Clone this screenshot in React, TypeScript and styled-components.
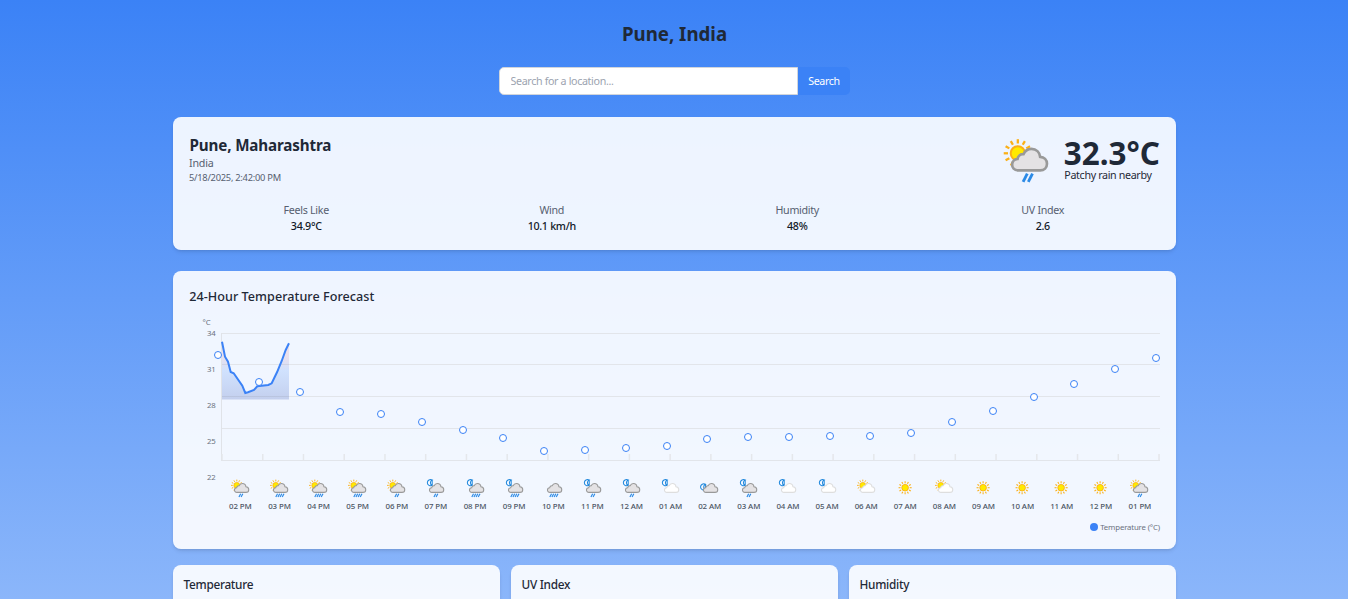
import React from "react";
import styled, { createGlobalStyle } from "styled-components";

const Global = createGlobalStyle`
  *, *::before, *::after { box-sizing: border-box; }
  html, body { margin: 0; height: 599px; overflow: hidden; }
  body { font-family: "Noto Sans", "Open Sans", sans-serif; color: #1f2937; }
  h1, h2, h3, p { margin: 0; }
`;

const Page = styled.div`
  height: 599px;
  overflow: hidden;
  background: linear-gradient(#3b82f6, #8bb6fa);
  display: flex;
  flex-direction: column;
  align-items: center;
`;

const Title = styled.h1`
  margin-top: 20px;
  padding-left: 1px;
  font-size: 18.7px;
  line-height: 28px;
  font-weight: 700;
`;

const SearchBar = styled.form`
  display: flex;
  flex: none;
  margin: 19px 0 22px;
  width: 351px;
  height: 28px;
`;

const SearchInput = styled.input`
  flex: 1;
  min-width: 0;
  padding: 0 11px;
  border: 1px solid #d1d5db;
  border-radius: 5px 0 0 5px;
  background: #fff;
  font: 10.7px "Noto Sans", sans-serif;
  letter-spacing: -0.35px;
  &::placeholder { color: #9ca3af; }
`;

const SearchButton = styled.button`
  width: 52px;
  padding: 0 0 0 1px;
  border: 0;
  border-radius: 0 5px 5px 0;
  background: #3b82f6;
  color: #fff;
  font: 10.7px "Noto Sans", sans-serif;
  letter-spacing: -0.35px;
`;

const Main = styled.main`
  width: 1003px;
  flex: none;
`;

const Card = styled.section<{ $h: number; $gap: number }>`
  height: ${(p) => p.$h}px;
  margin-bottom: ${(p) => p.$gap}px;
  padding: 16px 16px 0;
  border-radius: 8px;
  background: rgba(255, 255, 255, 0.9);
  box-shadow: 0 3px 4px -1px rgba(0, 0, 0, 0.1), 0 1px 3px -1px rgba(0, 0, 0, 0.1);
`;

const CurrentCard = styled(Card)`
  padding: 16px 15.5px 0 16.5px;
`;

const Row = styled.div`
  display: flex;
  justify-content: space-between;
`;

const Place = styled.h2`
  margin: 2px 0 0 0.5px;
  font-size: 15.2px;
  line-height: 21px;
  letter-spacing: -0.14px;
`;

const Muted = styled.p<{ $size: number; $lh: number; $ls: number }>`
  font-size: ${(p) => p.$size}px;
  line-height: ${(p) => p.$lh}px;
  letter-spacing: ${(p) => p.$ls}px;
  color: #566070;
`;

const Now = styled.div`
  display: flex;
`;

const BigIcon = styled.svg`
  width: 45.6px;
  height: 43.7px;
  margin: 6.800px 13px 0 0;
  overflow: visible;
`;

const Degrees = styled.p`
  margin-top: 2.5px;
  font-size: 31.4px;
  line-height: 33px;
  font-weight: 700;
  white-space: nowrap;
`;

const Condition = styled.p`
  padding-left: 0.5px;
  font-size: 10.7px;
  line-height: 12px;
  letter-spacing: -0.35px;
`;

const Stats = styled.div`
  display: grid;
  grid-template-columns: repeat(4, 1fr);
  column-gap: 11px;
  margin-top: 17px;
  text-align: center;
`;

const StatValue = styled.p`
  font-size: 10.7px;
  line-height: 16px;
  font-weight: 500;
  letter-spacing: -0.3px;
  color: #111827;
`;

const ChartTitle = styled.h3`
  margin-left: 0.7px;
  font-size: 12.6px;
  line-height: 19px;
  letter-spacing: 0.04px;
  font-weight: 500;
`;

const ChartBody = styled.div`
  display: flex;
  margin-top: 11px;
  height: 170px;
`;

const Scale = styled.div`
  width: 32px;
  padding-right: 5px;
  text-align: right;
  font-size: 7.8px;
  line-height: 10px;
  letter-spacing: -0.15px;
  color: #6b7280;
`;

const Unit = styled.div`
  padding-right: 5px;
  height: 11px;
`;

const ScaleMark = styled.div`
  height: 36px;
`;

const Plot = styled.svg`
  width: 947px;
  height: 150px;
  margin-left: -8px;
  overflow: visible;
  flex: none;
`;

const Hours = styled.div`
  display: grid;
  grid-template-columns: repeat(24, 1fr);
  margin: -9px 0 0 32.3px;
`;

const Hour = styled.div`
  display: flex;
  flex-direction: column;
  align-items: center;
  font-size: 7.9px;
  line-height: 11px;
  letter-spacing: -0.1px;
  font-weight: 500;
  color: #4b5563;
  white-space: nowrap;
`;

const HourIcon = styled.svg`
  width: 21px;
  height: 21px;
  margin-bottom: 2px;
`;

const Legend = styled.div`
  display: flex;
  justify-content: flex-end;
  align-items: center;
  gap: 2.5px;
  margin: 9.5px -0.5px 0 0;
  font-size: 7.8px;
  line-height: 11px;
  letter-spacing: -0.15px;
  color: #6b7280;
`;

const Dot = styled.span`
  width: 8px;
  height: 8px;
  border-radius: 50%;
  background: #3b82f6;
`;

const Panels = styled.div`
  display: grid;
  grid-template-columns: repeat(3, 1fr);
  gap: 11px;
`;

const Panel = styled(Card)`
  padding: 9px 11px;
`;

const PanelTitle = styled.h3`
  font-size: 11.8px;
  line-height: 20px;
  letter-spacing: -0.28px;
  font-weight: 500;
`;

type Sky = "day" | "night" | "none";
type Kind = { sky: Sky; cloud?: "grey" | "white"; drops?: number; low?: boolean };

const CLOUD =
  "M12 32C7.500 32 5.500 29 5.500 26C5.500 22.500 8 20.200 11.200 19.900C11.800 16.500 14.500 14.600 17.500 14.900C19 11.500 22 9.300 25.800 9.300C31 9.300 34.500 13 35 17.700C39.300 18 42.200 21 42.200 25C42.200 29 39.300 32 35 32Z";

function Sun({ x, y, r }: { x: number; y: number; r: number }) {
  return (
    <g>
      <circle cx={x} cy={y} r={r} fill="#ffea00" stroke="#fbb017" strokeWidth={r * 0.28} />
      {Array.from({ length: 12 }, (_, i) => {
        const a = (i * Math.PI) / 6;
        return (
          <line
            key={i}
            x1={x + Math.cos(a) * r * 1.38}
            y1={y + Math.sin(a) * r * 1.38}
            x2={x + Math.cos(a) * r * 1.98}
            y2={y + Math.sin(a) * r * 1.98}
            stroke="#fbb017"
            strokeWidth={r * 0.32}
          />
        );
      })}
    </g>
  );
}

function Weather({ sky, cloud, drops = 0, low }: Kind) {
  if (!cloud) return <Sun x={22} y={20} r={8.500} />;
  return (
    <g>
      {sky === "day" && <Sun x={13.500} y={14} r={7.500} />}
      {sky === "night" && (
        <path
          transform={low ? "translate(-2 11)" : undefined}
          d="M14.500 0C9 -3 2 1 2 7S9 17 14.500 14C8.500 12 8.500 2 14.500 0ZM14.500 1V13"
          fill="none"
          stroke="#1c86dc"
          strokeWidth="2.600"
        />
      )}
      <path
        d={CLOUD}
        transform="translate(2 0)"
        fill={cloud === "grey" ? "#e4e2e4" : "#fff"}
        stroke={cloud === "grey" ? "#999" : "#dedede"}
        strokeWidth="2.800"
      />
      {Array.from({ length: drops }, (_, i) => {
        const x = 24 - (drops - 1) * 2.75 + i * 5.5;
        return <path key={i} d={`M${x + 2.2} 35.500L${x - 2.2} 44`} stroke="#2b8ae6" strokeWidth="3" />;
      })}
    </g>
  );
}

const light: Kind = { sky: "day", cloud: "grey", drops: 2 };
const heavy: Kind = { sky: "day", cloud: "grey", drops: 4 };
const nightLight: Kind = { sky: "night", cloud: "grey", drops: 2 };
const nightHeavy: Kind = { sky: "night", cloud: "grey", drops: 4 };
const nightClear: Kind = { sky: "night", cloud: "white" };
const fair: Kind = { sky: "day", cloud: "white" };
const sunny: Kind = { sky: "day" };

const hours: [string, Kind, number][] = [
  ["02 PM", light, 355],
  ["03 PM", heavy, 382],
  ["04 PM", heavy, 392],
  ["05 PM", heavy, 412],
  ["06 PM", light, 414],
  ["07 PM", nightLight, 422],
  ["08 PM", nightHeavy, 430],
  ["09 PM", nightHeavy, 438],
  ["10 PM", { sky: "none", cloud: "grey", drops: 4 }, 451],
  ["11 PM", nightLight, 450],
  ["12 AM", nightLight, 448],
  ["01 AM", nightClear, 446],
  ["02 AM", { sky: "night", cloud: "grey", low: true }, 439],
  ["03 AM", nightLight, 437],
  ["04 AM", nightClear, 437],
  ["05 AM", nightClear, 436],
  ["06 AM", fair, 436],
  ["07 AM", sunny, 433],
  ["08 AM", fair, 422],
  ["09 AM", sunny, 411],
  ["10 AM", sunny, 397],
  ["11 AM", sunny, 384],
  ["12 PM", sunny, 369],
  ["01 PM", light, 358],
];

const LINE =
  "M9 24.700L12 39.700L15 44.700L17.700 55L20.700 56.300L29.300 68.700L32.300 76L35 75.300L41 73L44.300 69.300L55.300 68L58.700 66.300L64 55.300L68.700 44L72.700 33L76 26.300";

const stats = [
  ["Feels Like", "34.9°C"],
  ["Wind", "10.1 km/h"],
  ["Humidity", "48%"],
  ["UV Index", "2.6"],
];

export default function App() {
  return (
    <Page>
      <Global />
      <Title>Pune, India</Title>
      <SearchBar>
        <SearchInput placeholder="Search for a location..." />
        <SearchButton type="button">Search</SearchButton>
      </SearchBar>
      <Main>
        <CurrentCard $h={133} $gap={21}>
          <Row>
            <div>
              <Place>Pune, Maharashtra</Place>
              <Muted $size={10.7} $lh={14} $ls={-0.2}>India</Muted>
              <Muted $size={9.3} $lh={15} $ls={-0.25}>5/18/2025, 2:42:00 PM</Muted>
            </div>
            <Now>
              <BigIcon viewBox="0 0 48 46">
                <Weather {...light} />
              </BigIcon>
              <div>
                <Degrees>32.3°C</Degrees>
                <Condition>Patchy rain nearby</Condition>
              </div>
            </Now>
          </Row>
          <Stats>
            {stats.map(([label, value]) => (
              <div key={label}>
                <Muted $size={10.7} $lh={16} $ls={-0.3}>{label}</Muted>
                <StatValue>{value}</StatValue>
              </div>
            ))}
          </Stats>
        </CurrentCard>
        <Card $h={278} $gap={16}>
          <ChartTitle>24-Hour Temperature Forecast</ChartTitle>
          <ChartBody>
            <Scale>
              <Unit>°C</Unit>
              {[34, 31, 28, 25, 22].map((n) => (
                <ScaleMark key={n}>{n}</ScaleMark>
              ))}
            </Scale>
            <Plot viewBox="0 0 947 150">
              <defs>
                <linearGradient id="area" x1="0" y1="0" x2="0" y2="1">
                  <stop offset="0" stopColor="#ef4444" stopOpacity="0.12" />
                  <stop offset="0.25" stopColor="#c05a80" stopOpacity="0.14" />
                  <stop offset="0.5" stopColor="#3b82f6" stopOpacity="0.18" />
                  <stop offset="1" stopColor="#3454b4" stopOpacity="0.24" />
                </linearGradient>
              </defs>
              {[16, 47, 79, 111, 143].map((y) => (
                <line key={y} x1="8" x2="947" y1={y + 0.5} y2={y + 0.5} stroke="#e2e5ea" />
              ))}
              <line x1="8.5" x2="8.5" y1="16" y2="143" stroke="#e0e3e8" />
              {hours.map(([label], i) => (
                <line key={label} x1={9 + i * 40.74} x2={9 + i * 40.74} y1="137" y2="143" stroke="#e5e7eb" strokeWidth="1.500" />
              ))}
              <path d={`${LINE}V82.500H9Z`} fill="url(#area)" />
              <path d={LINE} fill="none" stroke="#3b82f6" strokeWidth="2" />
              {hours.map(([label, , y], i) => (
                <circle key={label} cx={Math.round(5 + i * 40.78)} cy={y - 317} r="3.500" fill="#fff" stroke="#3b82f6" />
              ))}
            </Plot>
          </ChartBody>
          <Hours>
            {hours.map(([label, kind]) => (
              <Hour key={label}>
                <HourIcon viewBox="-4 -5 54 54">
                  <Weather {...kind} />
                </HourIcon>
                {label}
              </Hour>
            ))}
          </Hours>
          <Legend>
            <Dot />
            Temperature (°C)
          </Legend>
        </Card>
        <Panels>
          {["Temperature", "UV Index", "Humidity"].map((name) => (
            <Panel key={name} $h={120} $gap={0}>
              <PanelTitle>{name}</PanelTitle>
            </Panel>
          ))}
        </Panels>
      </Main>
    </Page>
  );
}
